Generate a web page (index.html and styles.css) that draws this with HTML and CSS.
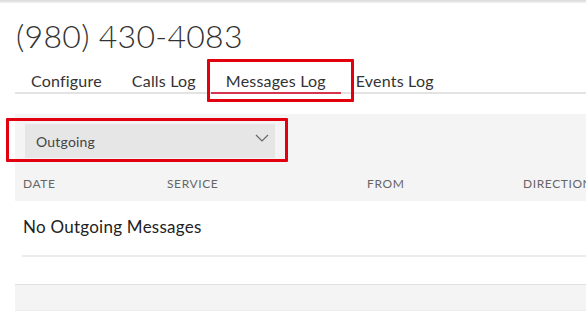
FILE: index.html
```html
<!DOCTYPE html>
<html>
<head>
<meta charset="utf-8">
<link rel="stylesheet" href="styles.css">
</head>
<body>
<div class="topbar"></div>
<main class="page">
  <h1 class="title">(980) 430-4083</h1>
  <nav class="tabs">
    <a class="tab">Configure</a>
    <a class="tab">Calls Log</a>
    <a class="tab active">Messages Log</a>
    <a class="tab">Events Log</a>
  </nav>
  <section class="panel">
    <div class="filter">
      <div class="select">
        <span>Outgoing</span>
        <svg class="chev" width="14" height="8" viewBox="0 0 14 8"><path d="M1 1 L7 7 L13 1" fill="none" stroke="#666" stroke-width="1.2"/></svg>
      </div>
    </div>
    <div class="thead">
      <span>Date</span>
      <span>Service</span>
      <span>From</span>
      <span>Direction</span>
    </div>
  </section>
  <div class="tbody">
    <div class="row">No Outgoing Messages</div>
  </div>
  <div class="footer"></div>
</main>
<div class="mark mark-tab"></div>
<div class="mark mark-select"></div>
</body>
</html>
```
FILE: styles.css
```css
html, body {
  margin: 0;
  padding: 0;
  background: #fff;
  overflow: hidden;
  font-family: Lato, "Open Sans", sans-serif;
}
.topbar {
  height: 3px;
  background: linear-gradient(#d9d9d9, #f2f2f2);
}
.page {
  width: 700px;
  padding-left: 15px;
}
.title {
  margin: 0;
  padding: 14px 0 0 1px;
  font-size: 32px;
  font-weight: 300;
  color: #333;
  line-height: 38px;
  letter-spacing: 0.3px;
}
.tabs {
  display: flex;
  margin-top: 16px;
  border-bottom: 2px solid #e3e3e3;
  padding-left: 1px;
}
.tab {
  padding: 0 15px 2px;
  font-size: 16px;
  letter-spacing: 0.2px;
  line-height: 19px;
  color: #333;
  margin-bottom: -2px;
  border-bottom: 2px solid transparent;
}
.tab.active {
  border-bottom-color: #d8334f;
}
.panel {
  margin-top: 20px;
  background: #f4f4f4;
}
.filter {
  padding: 10px 0 0 10px;
}
.select {
  width: 250px;
  height: 34px;
  background: #e6e6e6;
  display: flex;
  align-items: center;
  justify-content: space-between;
  box-sizing: border-box;
  padding: 0 11px 0 11px;
  font-size: 14px;
  letter-spacing: 0.2px;
  color: #444;
}
.chev {
  margin-top: -6px;
  margin-right: -5px;
}
.thead {
  display: grid;
  grid-template-columns: 144px 200px 156px 150px;
  height: 43px;
  box-sizing: border-box;
  padding: 8px 0 0 8px;
  align-items: center;
  font-size: 12px;
  letter-spacing: 0.6px;
  text-transform: uppercase;
  color: #666;
}
.tbody {
  padding-left: 7px;
}
.row {
  height: 56px;
  box-sizing: border-box;
  padding: 15px 0 0 1px;
  font-size: 17px;
  letter-spacing: 0.25px;
  color: #222;
  border-bottom: 2px solid #ececec;
}
.footer {
  margin-top: 27px;
  height: 27px;
  background: #f4f4f4;
  border-top: 1px solid #e0e0e0;
  border-bottom: 1px solid #ededed;
  box-sizing: border-box;
}
.mark {
  position: absolute;
  border: 3px solid #e2000e;
  box-sizing: border-box;
  border-radius: 1px;
}
.mark-tab {
  left: 207px;
  top: 59px;
  width: 147px;
  height: 43px;
}
.mark-select {
  left: 6px;
  top: 118px;
  width: 282px;
  height: 44px;
}
```
